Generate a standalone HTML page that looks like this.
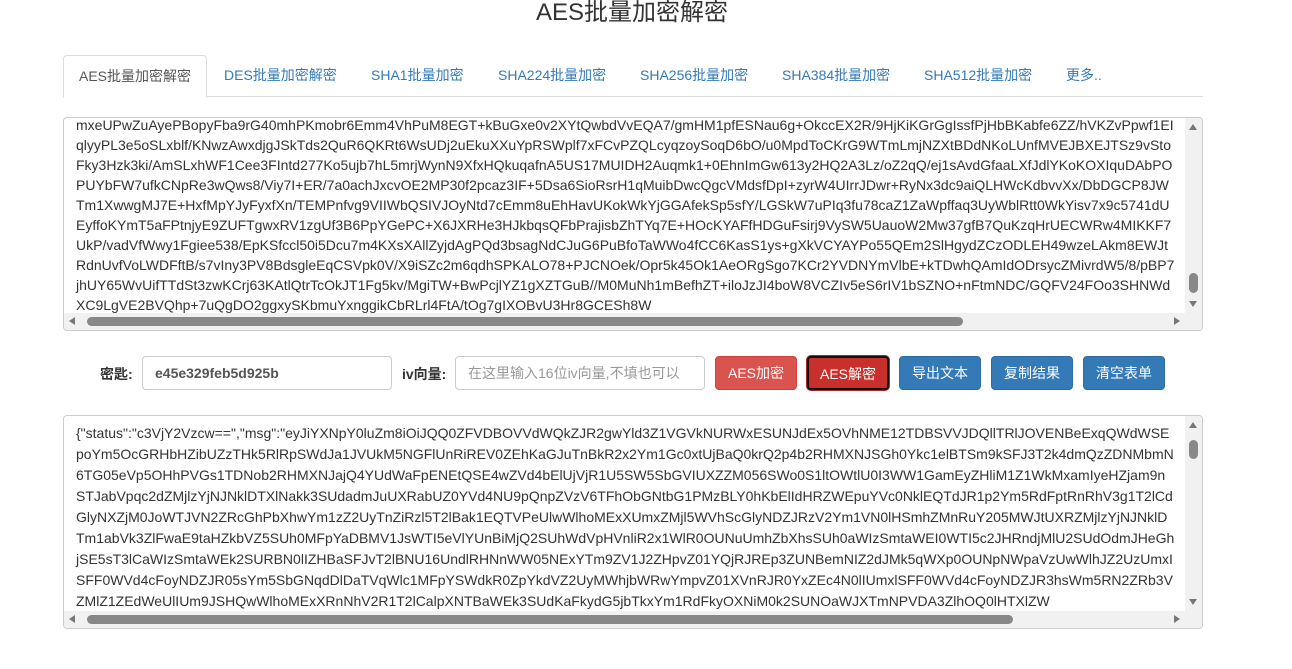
<!DOCTYPE html>
<html><head><meta charset="utf-8"><style>
*{box-sizing:border-box}
body{margin:0;width:1292px;height:669px;background:#fff;font-family:"Liberation Sans","Noto Sans CJK SC",sans-serif;color:#333;overflow:hidden;position:relative}
h1{position:absolute;top:-4px;left:0;width:1264px;text-align:center;font-size:24px;font-weight:normal;margin:0;line-height:34px;color:#333}
.tabs{position:absolute;left:63px;top:55px;width:1140px;height:42px;border-bottom:1px solid #ddd}
.tab{position:absolute;top:0;height:42px;line-height:41px;font-size:14px;color:#337ab7}
.tab.act{border:1px solid #ddd;border-bottom-color:#fff;border-radius:4px 4px 0 0;background:#fff;color:#555;height:43px;padding:0 15px}
.ta{position:absolute;left:63px;width:1140px;height:214px;border:1px solid #ccc;border-radius:4px;overflow:hidden;background:#fff}
.txt{position:absolute;left:12px;font-size:14px;line-height:20px;white-space:pre;color:#333}
.vs{position:absolute;right:0;top:0;width:17px;bottom:17px;background:#f1f1f1}
.hs{position:absolute;left:0;bottom:0;height:17px;right:17px;background:#f1f1f1}
.corner{position:absolute;right:0;bottom:0;width:17px;height:17px;background:#f1f1f1}
.thumbv{position:absolute;left:4px;width:9px;border-radius:5px;background:#888}
.thumbh{position:absolute;top:4px;height:9px;border-radius:5px;background:#888}
.arr{position:absolute;width:0;height:0}
.lbl{position:absolute;top:364px;font-size:14px;font-weight:bold;color:#333}
.inp{position:absolute;top:356px;height:34px;border:1px solid #ccc;border-radius:4px;font-size:14px;padding:0 12px;line-height:32px}
.btn{position:absolute;top:356px;height:34px;width:82px;border-radius:4px;color:#fff;font-size:14px;text-align:center;line-height:32px;border:1px solid}
.blue{background:#337ab7;border-color:#2e6da4}
</style></head><body>
<h1>AES批量加密解密</h1>
<div class="tabs">
<div class="tab act" style="left:0">AES批量加密解密</div>
<div class="tab" style="left:161px">DES批量加密解密</div>
<div class="tab" style="left:308px">SHA1批量加密</div>
<div class="tab" style="left:435px">SHA224批量加密</div>
<div class="tab" style="left:577px">SHA256批量加密</div>
<div class="tab" style="left:719px">SHA384批量加密</div>
<div class="tab" style="left:861px">SHA512批量加密</div>
<div class="tab" style="left:1003px">更多..</div>
</div>

<div class="ta" style="top:117px">
<div class="txt" style="top:-3px">mxeUPwZuAyePBopyFba9rG40mhPKmobr6Emm4VhPuM8EGT+kBuGxe0v2XYtQwbdVvEQA7/gmHM1pfESNau6g+OkccEX2R/9HjKiKGrGgIssfPjHbBKabfe6ZZ/hVKZvPpwf1EI
qlyyPL3e5oSLxblf/KNwzAwxdjgJSkTds2QuR6QKRt6WsUDj2uEkuXXuYpRSWplf7xFCvPZQLcyqzoySoqD6bO/u0MpdToCKrG9WTmLmjNZXtBDdNKoLUnfMVEJBXEJTSz9vSto
Fky3Hzk3ki/AmSLxhWF1Cee3FIntd277Ko5ujb7hL5mrjWynN9XfxHQkuqafnA5US17MUIDH2Auqmk1+0EhnImGw613y2HQ2A3Lz/oZ2qQ/ej1sAvdGfaaLXfJdlYKoKOXIquDAbPO
PUYbFW7ufkCNpRe3wQws8/Viy7I+ER/7a0achJxcvOE2MP30f2pcaz3IF+5Dsa6SioRsrH1qMuibDwcQgcVMdsfDpI+zyrW4UIrrJDwr+RyNx3dc9aiQLHWcKdbvvXx/DbDGCP8JW
Tm1XwwgMJ7E+HxfMpYJyFyxfXn/TEMPnfvg9VIIWbQSIVJOyNtd7cEmm8uEhHavUKokWkYjGGAfekSp5sfY/LGSkW7uPIq3fu78caZ1ZaWpffaq3UyWblRtt0WkYisv7x9c5741dU
EyffoKYmT5aFPtnjyE9ZUFTgwxRV1zgUf3B6PpYGePC+X6JXRHe3HJkbqsQFbPrajisbZhTYq7E+HOcKYAFfHDGuFsirj9VySW5UauoW2Mw37gfB7QuKzqHrUECWRw4MIKKF7
UkP/vadVfWwy1Fgiee538/EpKSfccl50i5Dcu7m4KXsXAllZyjdAgPQd3bsagNdCJuG6PuBfoTaWWo4fCC6KasS1ys+gXkVCYAYPo55QEm2SlHgydZCzODLEH49wzeLAkm8EWJt
RdnUvfVoLWDFftB/s7vIny3PV8BdsgleEqCSVpk0V/X9iSZc2m6qdhSPKALO78+PJCNOek/Opr5k45Ok1AeORgSgo7KCr2YVDNYmVlbE+kTDwhQAmIdODrsycZMivrdW5/8/pBP7
jhUY65WvUifTTdSt3zwKCrj63KAtlQtrTcOkJT1Fg5kv/MgiTW+BwPcjlYZ1gXZTGuB//M0MuNh1mBefhZT+iloJzJI4boW8VCZIv5eS6rIV1bSZNO+nFtmNDC/GQFV24FOo3SHNWd
XC9LgVE2BVQhp+7uQgDO2ggxySKbmuYxnggikCbRLrl4FtA/tOg7gIXOBvU3Hr8GCESh8W</div>
<div class="vs"><div class="arr" style="left:4px;top:6px;border:4px solid transparent;border-bottom:6px solid #777;border-top:0"></div><div class="thumbv" style="top:155px;height:20px"></div><div class="arr" style="left:4px;bottom:6px;border:4px solid transparent;border-top:6px solid #777;border-bottom:0"></div></div>
<div class="hs"><div class="arr" style="left:5px;top:4px;border:4px solid transparent;border-right:6px solid #777;border-left:0"></div><div class="thumbh" style="left:23px;width:876px"></div><div class="arr" style="right:5px;top:4px;border:4px solid transparent;border-left:6px solid #777;border-right:0"></div></div>
<div class="corner"></div>
</div>

<div class="lbl" style="left:100px">密匙:</div>
<div class="inp" style="left:142px;width:250px;font-weight:bold;color:#555">e45e329feb5d925b</div>
<div class="lbl" style="left:402px">iv向量:</div>
<div class="inp" style="left:455px;width:250px;color:#999">在这里输入16位iv向量,不填也可以</div>
<div class="btn" style="left:715px;background:#d9534f;border-color:#d43f3a">AES加密</div>
<div class="btn" style="left:807px;background:#c9302c;border:2px solid #111;box-shadow:0 0 0 1px #ac2925">AES解密</div>
<div class="btn blue" style="left:899px">导出文本</div>
<div class="btn blue" style="left:991px">复制结果</div>
<div class="btn blue" style="left:1083px">清空表单</div>

<div class="ta" style="top:415px">
<div class="txt" style="top:7px;line-height:21px">{"status":"c3VjY2Vzcw==","msg":"eyJiYXNpY0luZm8iOiJQQ0ZFVDBOVVdWQkZJR2gwYld3Z1VGVkNURWxESUNJdEx5OVhNME12TDBSVVJDQllTRlJOVENBeExqQWdWSE
poYm5OcGRHbHZibUZzTHk5RlRpSWdJa1JVUkM5NGFlUnRiREV0ZEhKaGJuTnBkR2x2Ym1Gc0xtUjBaQ0krQ2p4b2RHMXNJSGh0Ykc1elBTSm9kSFJ3T2k4dmQzZDNMbmN
6TG05eVp5OHhPVGs1TDNob2RHMXNJajQ4YUdWaFpENEtQSE4wZVd4bElUjVjR1U5SW5SbGVIUXZZM056SWo0S1ltOWtlU0I3WW1GamEyZHliM1Z1WkMxamIyeHZjam9n
STJabVpqc2dZMjlzYjNJNklDTXlNakk3SUdadmJuUXRabUZ0YVd4NU9pQnpZVzV6TFhObGNtbG1PMzBLY0hKbElIdHRZWEpuYVc0NklEQTdJR1p2Ym5RdFptRnRhV3g1T2lCd
GlyNXZjM0JoWTJVN2ZRcGhPbXhwYm1zZ2UyTnZiRzl5T2lBak1EQTVPeUlwWlhoMExXUmxZMjl5WVhScGlyNDZJRzV2Ym1VN0lHSmhZMnRuY205MWJtUXRZMjlzYjNJNklD
Tm1abVk3ZlFwaE9taHZkbVZ5SUh0MFpYaDBMV1JsWTI5eVlYUnBiMjQ2SUhWdVpHVnliR2x1WlR0OUNuUmhZbXhsSUh0aWIzSmtaWEI0WTI5c2JHRndjMlU2SUdOdmJHeGh
jSE5sT3lCaWIzSmtaWEk2SURBN0lIZHBaSFJvT2lBNU16UndlRHNnWW05NExYTm9ZV1J2ZHpvZ01YQjRJREp3ZUNBemNIZ2dJMk5qWXp0OUNpNWpaVzUwWlhJZ2UzUmxI
SFF0WVd4cFoyNDZJR05sYm5SbGNqdDlDaTVqWlc1MFpYSWdkR0ZpYkdVZ2UyMWhjbWRwYmpvZ01XVnRJR0YxZEc4N0lIUmxlSFF0WVd4cFoyNDZJR3hsWm5RN2ZRb3V
ZMlZ1ZEdWeUlIUm9JSHQwWlhoMExXRnNhV2R1T2lCalpXNTBaWEk3SUdKaFkydG5jbTkxYm1RdFkyOXNiM0k2SUNOaWJXTmNPVDA3ZlhOQ0lHTXlZW
NnWm05dWRDMXphWHBsT2lBM05TVTdJSEpsY25ScFkyRnNMV0ZzYVdkdU9pQmlZWE5sYkdsdVpUc2diR2x1WlMxb1pXbG5hSFE2SURFdU5YUWdWNGR4bFhOdFZVbFc0OjJPMW</div>
<div class="vs"><div class="arr" style="left:4px;top:6px;border:4px solid transparent;border-bottom:6px solid #777;border-top:0"></div><div class="thumbv" style="top:24px;height:19px"></div><div class="arr" style="left:4px;bottom:6px;border:4px solid transparent;border-top:6px solid #777;border-bottom:0"></div></div>
<div class="hs"><div class="arr" style="left:5px;top:4px;border:4px solid transparent;border-right:6px solid #777;border-left:0"></div><div class="thumbh" style="left:23px;width:926px"></div><div class="arr" style="right:5px;top:4px;border:4px solid transparent;border-left:6px solid #777;border-right:0"></div></div>
<div class="corner"></div>
</div>
</body></html>
